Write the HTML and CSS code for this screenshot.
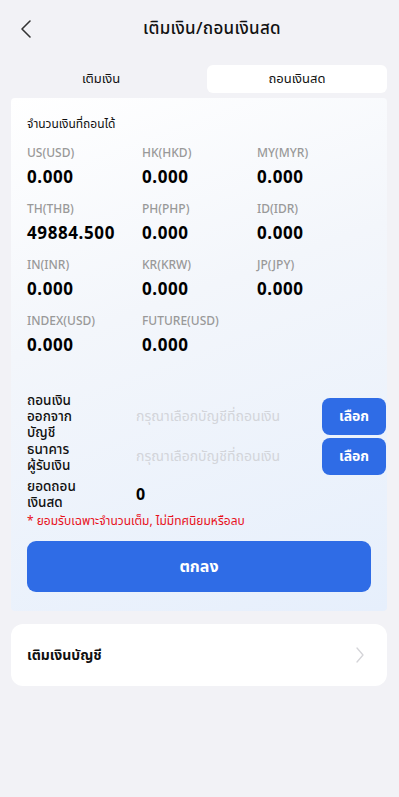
FILE: index.html
```
<!DOCTYPE html>
<html lang="th">
<head>
<meta charset="utf-8">
<link rel="stylesheet" href="styles.css">
</head>
<body>
<div class="page">
  <header class="topbar">
    <svg class="back" width="14" height="20" viewBox="0 0 14 20"><path d="M11 2 L3 10 L11 18" fill="none" stroke="#333" stroke-width="1.6" stroke-linecap="round" stroke-linejoin="round"/></svg>
    <h1 class="title">เติมเงิน/ถอนเงินสด</h1>
  </header>
  <nav class="tabs">
    <div class="tab">เติมเงิน</div>
    <div class="tab active">ถอนเงินสด</div>
  </nav>
  <section class="card">
    <div class="card-title">จำนวนเงินที่ถอนได้</div>
    <div class="grid">
      <div class="cell"><div class="cur">US(USD)</div><div class="amt">0.000</div></div>
      <div class="cell"><div class="cur">HK(HKD)</div><div class="amt">0.000</div></div>
      <div class="cell"><div class="cur">MY(MYR)</div><div class="amt">0.000</div></div>
      <div class="cell"><div class="cur">TH(THB)</div><div class="amt">49884.500</div></div>
      <div class="cell"><div class="cur">PH(PHP)</div><div class="amt">0.000</div></div>
      <div class="cell"><div class="cur">ID(IDR)</div><div class="amt">0.000</div></div>
      <div class="cell"><div class="cur">IN(INR)</div><div class="amt">0.000</div></div>
      <div class="cell"><div class="cur">KR(KRW)</div><div class="amt">0.000</div></div>
      <div class="cell"><div class="cur">JP(JPY)</div><div class="amt">0.000</div></div>
      <div class="cell"><div class="cur">INDEX(USD)</div><div class="amt">0.000</div></div>
      <div class="cell"><div class="cur">FUTURE(USD)</div><div class="amt">0.000</div></div>
    </div>
    <div class="form">
      <div class="row row-account">
        <div class="label"><span class="ln">ถอนเงิน</span><span class="ln">ออกจาก</span><span class="ln">บัญชี</span></div>
        <div class="placeholder">กรุณาเลือกบัญชีที่ถอนเงิน</div>
        <button class="pick">เลือก</button>
      </div>
      <div class="row row-bank">
        <div class="label"><span class="ln">ธนาคาร</span><span class="ln">ผู้รับเงิน</span></div>
        <div class="placeholder">กรุณาเลือกบัญชีที่ถอนเงิน</div>
        <button class="pick">เลือก</button>
      </div>
      <div class="row row-amount">
        <div class="label"><span class="ln">ยอดถอน</span><span class="ln">เงินสด</span></div>
        <div class="value">0</div>
      </div>
      <div class="note">* ยอมรับเฉพาะจำนวนเต็ม, ไม่มีทศนิยมหรือลบ</div>
      <button class="submit">ตกลง</button>
    </div>
  </section>
  <section class="link-card">
    <div class="link-text">เติมเงินบัญชี</div>
    <svg width="10" height="18" viewBox="0 0 10 18"><path d="M2 2 L8 9 L2 16" fill="none" stroke="#d4d4d8" stroke-width="1.3" stroke-linecap="round" stroke-linejoin="round"/></svg>
  </section>
</div>
</body>
</html>
```
FILE: styles.css
```
* { box-sizing: border-box; }
html, body { margin: 0; padding: 0; }
body {
  background: #f2f2f6;
  font-family: "Noto Sans", "Noto Sans Thai", "DejaVu Sans", sans-serif;
  color: #000;
  width: 399px;
  min-height: 797px;
}
.page { padding: 0 12px 0 11px; }
.topbar {
  height: 57px;
  display: flex;
  align-items: center;
  justify-content: center;
  position: relative;
}
.back { position: absolute; left: 8px; top: 19px; }
.title { margin: 0 0 0 26px; font-size: 17px; font-weight: 500; color: #111; letter-spacing: 0.3px; }
.tabs {
  display: grid;
  grid-template-columns: 1fr 1fr;
  column-gap: 16px;
  height: 28px;
  margin-top: 8px;
}
.tab {
  display: flex; align-items: center; justify-content: center;
  font-size: 13px; color: #111; border-radius: 6px;
}
.tab.active { background: #fff; }
.card {
  margin-top: 5px;
  border-radius: 4px;
  background: linear-gradient(160deg, #ffffff 0%, #f3f6fb 40%, #e6effc 100%);
  padding: 16px 16px 19px 16px;
}
.card-title { font-size: 12px; color: #111; line-height: 20px; }
.grid {
  display: grid;
  grid-template-columns: 115px 115px 115px;
  row-gap: 10px;
  margin-top: 10px;
}
.cell { height: 46px; }
.cur { font-size: 12px; color: #999; line-height: 18px; font-weight: 500; }
.amt { font-size: 17px; font-weight: 700; line-height: 26px; margin-top: 2px; letter-spacing: 0.6px; }
.form { margin-top: 34px; }
.row { display: flex; align-items: center; }
.row-account { height: 48px; }
.row-bank { height: 37px; margin-top: -2px; }
.row-amount { height: 32px; margin-top: 3px; }
.label { width: 109px; font-size: 13.5px; font-weight: 500; color: #111; }
.ln { display: block; height: 16px; line-height: 16px; overflow: visible; white-space: nowrap; }
.placeholder { flex: 1; font-size: 14px; color: #d3d5da; white-space: nowrap; }
.pick {
  width: 64px; height: 37px; flex: none;
  border: 0; border-radius: 8px;
  background: #2f6ce6; color: #fff;
  font-family: inherit; font-size: 14px; font-weight: 700;
  margin-right: -15px;
}
.value { font-size: 16px; font-weight: 700; }
.note { color: #e8111b; font-size: 12px; line-height: 18px; margin-top: 2px; white-space: nowrap; }
.submit {
  display: block; width: 344px; height: 51px; margin-top: 11px;
  border: 0; border-radius: 9px;
  background: #2f6ce6; color: #fff;
  font-family: inherit; font-size: 16px; font-weight: 700;
}
.link-card {
  margin-top: 13px;
  height: 62px;
  background: #fff;
  border-radius: 12px;
  display: flex; align-items: center; justify-content: space-between;
  padding: 0 22px 0 16px;
}
.link-text { font-size: 14px; font-weight: 700; color: #111; }
```
